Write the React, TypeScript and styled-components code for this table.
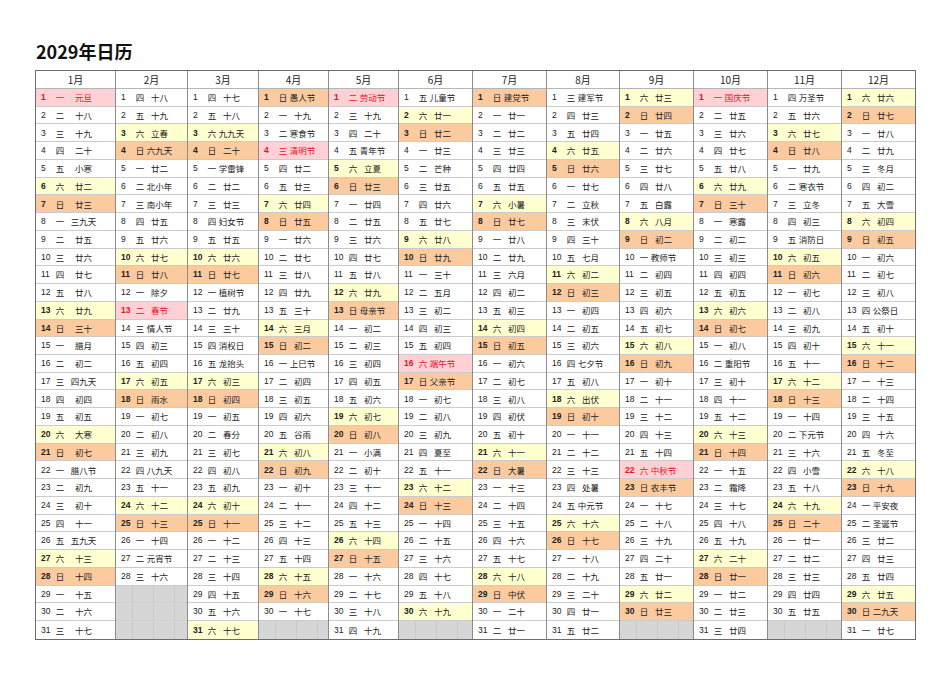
import React from 'react';
import styled, { createGlobalStyle } from 'styled-components';

type Kind = 'normal' | 'sat' | 'sun' | 'holiday' | 'empty';

const GlobalStyle = createGlobalStyle`
  body {
    margin: 0;
    background: #ffffff;
    font-family: "Liberation Sans", "Noto Sans CJK SC", sans-serif;
    color: #222;
  }
`;

const WEEK = ['日', '一', '二', '三', '四', '五', '六'];
const WIDTHS = [79, 72, 71, 70, 70, 74, 74, 73, 74, 74, 74, 74];
const HOLIDAYS = ['1-1', '2-13', '4-4', '5-1', '6-16', '9-22', '10-1'];

const LUNAR: string[] = [
  '元旦 十八 十九 二十 小寒 廿二 廿三 三九天 廿五 廿六 廿七 廿八 廿九 三十 腊月 初二 四九天 初四 初五 大寒 初七 腊八节 初九 初十 十一 五九天 十三 十四 十五 十六 十七',
  '十八 十九 立春 六九天 廿二 北小年 南小年 廿五 廿六 廿七 廿八 除夕 春节 情人节 初三 初四 初五 雨水 初七 初八 初九 八九天 十一 十二 十三 十四 元宵节 十六',
  '十七 十八 九九天 二十 学雷锋 廿二 廿三 妇女节 廿五 廿六 廿七 植树节 廿九 三十 消权日 龙抬头 初三 初四 初五 春分 初七 初八 初九 初十 十一 十二 十三 十四 十五 十六 十七',
  '愚人节 十九 寒食节 清明节 廿二 廿三 廿四 廿五 廿六 廿七 廿八 廿九 三十 三月 初二 上巳节 初四 初五 初六 谷雨 初八 初九 初十 十一 十二 十三 十四 十五 十六 十七',
  '劳动节 十九 二十 青年节 立夏 廿三 廿四 廿五 廿六 廿七 廿八 廿九 母亲节 初二 初三 初四 初五 初六 初七 初八 小满 初十 十一 十二 十三 十四 十五 十六 十七 十八 十九',
  '儿童节 廿一 廿二 廿三 芒种 廿五 廿六 廿七 廿八 廿九 三十 五月 初二 初三 初四 端午节 父亲节 初七 初八 初九 夏至 十一 十二 十三 十四 十五 十六 十七 十八 十九',
  '建党节 廿一 廿二 廿三 廿四 廿五 小暑 廿七 廿八 廿九 六月 初二 初三 初四 初五 初六 初七 初八 初伏 初十 十一 大暑 十三 十四 十五 十六 十七 十八 中伏 二十 廿一',
  '建军节 廿三 廿四 廿五 廿六 廿七 立秋 末伏 三十 七月 初二 初三 初四 初五 初六 七夕节 初八 出伏 初十 十一 十二 十三 处暑 中元节 十六 十七 十八 十九 二十 廿一 廿二',
  '廿三 廿四 廿五 廿六 廿七 廿八 白露 八月 初二 教师节 初四 初五 初六 初七 初八 初九 初十 十一 十二 十三 十四 中秋节 农丰节 十七 十八 十九 二十 廿一 廿二 廿三',
  '国庆节 廿五 廿六 廿七 廿八 廿九 三十 寒露 初二 初三 初四 初五 初六 初七 初八 重阳节 初十 十一 十二 十三 十四 十五 霜降 十七 十八 十九 二十 廿一 廿二 廿三 廿四',
  '万圣节 廿六 廿七 廿八 廿九 寒衣节 立冬 初三 消防日 初五 初六 初七 初八 初九 初十 十一 十二 十三 十四 下元节 十六 小雪 十八 十九 二十 廿一 廿二 廿三 廿四 廿五',
  '廿六 廿七 廿八 廿九 冬月 初二 大雪 初四 初五 初六 初七 初八 公祭日 初十 十一 十二 十三 十四 十五 十六 冬至 十八 十九 平安夜 圣诞节 廿二 廿三 廿四 廿五 二九天 廿七',
].map((s) => s);

const ROW_H = 17.74;

const Page = styled.div`
  padding: 39px 0 0 35px;
`;

const Title = styled.h1`
  margin: 0 0 7px 1px;
  font-family: "Noto Sans CJK SC", sans-serif;
  font-size: 18px;
  line-height: 24px;
  font-weight: 700;
  color: #111;
`;

const Table = styled.div`
  display: flex;
  width: fit-content;
  border: 1px solid #6c6c6c;
`;

const MonthCol = styled.div<{ $w: number; $first: boolean }>`
  box-sizing: border-box;
  width: ${(p) => p.$w}px;
  display: flex;
  flex-direction: column;
  border-left: ${(p) => (p.$first ? 'none' : '1.5px solid #8c8c8c')};
`;

const Head = styled.div`
  height: 18px;
  box-sizing: border-box;
  border-bottom: 1px solid #b5b5b5;
  display: flex;
  align-items: center;
  justify-content: center;
  font-family: "Noto Sans CJK SC", sans-serif;
  font-size: 10px;
  color: #222;
`;

const BG: Record<Kind, string> = {
  normal: '#ffffff',
  sat: '#ffffcf',
  sun: '#fbcb9f',
  holiday: '#ffd0d4',
  empty: '#d6d6d6',
};

const Cell = styled.div<{ $kind: Kind; $lunarW: number; $last: boolean }>`
  height: ${ROW_H}px;
  box-sizing: border-box;
  border-bottom: ${(p) => (p.$last ? 'none' : `1px solid ${p.$kind === 'empty' ? '#d0d0d0' : '#cbcbcb'}`)};
  display: grid;
  grid-template-columns: 17px 14px ${(p) => p.$lunarW}px 1fr;
  align-items: center;
  background-color: ${(p) => BG[p.$kind]};
  background-image: ${(p) =>
    p.$kind === 'empty'
      ? 'linear-gradient(90deg, transparent 16px, #c8c8c8 16px, #c8c8c8 17px, transparent 17px, transparent 37px, #c8c8c8 37px, #c8c8c8 38px, transparent 38px, transparent 58px, #c8c8c8 58px, #c8c8c8 59px, transparent 59px)'
      : 'none'};
  color: ${(p) => (p.$kind === 'holiday' ? '#e3141f' : '#222')};
  font-size: 8.5px;
  line-height: 1;
`;

const DayNum = styled.span<{ $bold: boolean }>`
  padding-left: 5px;
  font-family: "Liberation Sans", sans-serif;
  font-weight: ${(p) => (p.$bold ? 700 : 400)};
`;

const Week = styled.span`
  text-align: center;
  font-family: "Noto Sans CJK SC", sans-serif;
`;

const Lunar = styled.span`
  display: flex;
  justify-content: center;
  white-space: nowrap;
  font-family: "Noto Sans CJK SC", sans-serif;
`;

function kindOf(m: number, d: number): Kind {
  const date = new Date(2029, m, d);
  if (date.getMonth() !== m) return 'empty';
  if (HOLIDAYS.includes(`${m + 1}-${d}`)) return 'holiday';
  const w = date.getDay();
  if (w === 0) return 'sun';
  if (w === 6) return 'sat';
  return 'normal';
}

const days = Array.from({ length: 31 }, (_, i) => i + 1);

export default function App() {
  return (
    <Page>
      <GlobalStyle />
      <Title>2029年日历</Title>
      <Table>
        {WIDTHS.map((w, m) => {
          const lunar = LUNAR[m].split(' ');
          return (
            <MonthCol key={m} $w={w} $first={m === 0}>
              <Head>{m + 1}月</Head>
              {days.map((d) => {
                const kind = kindOf(m, d);
                const last = d === 31;
                if (kind === 'empty') {
                  return <Cell key={d} $kind="empty" $lunarW={25} $last={last} />;
                }
                const w2 = new Date(2029, m, d).getDay();
                return (
                  <Cell key={d} $kind={kind} $lunarW={m === 0 ? 33 : 25} $last={last}>
                    <DayNum $bold={kind !== 'normal'}>{d}</DayNum>
                    <Week>{WEEK[w2]}</Week>
                    <Lunar>{lunar[d - 1]}</Lunar>
                  </Cell>
                );
              })}
            </MonthCol>
          );
        })}
      </Table>
    </Page>
  );
}
